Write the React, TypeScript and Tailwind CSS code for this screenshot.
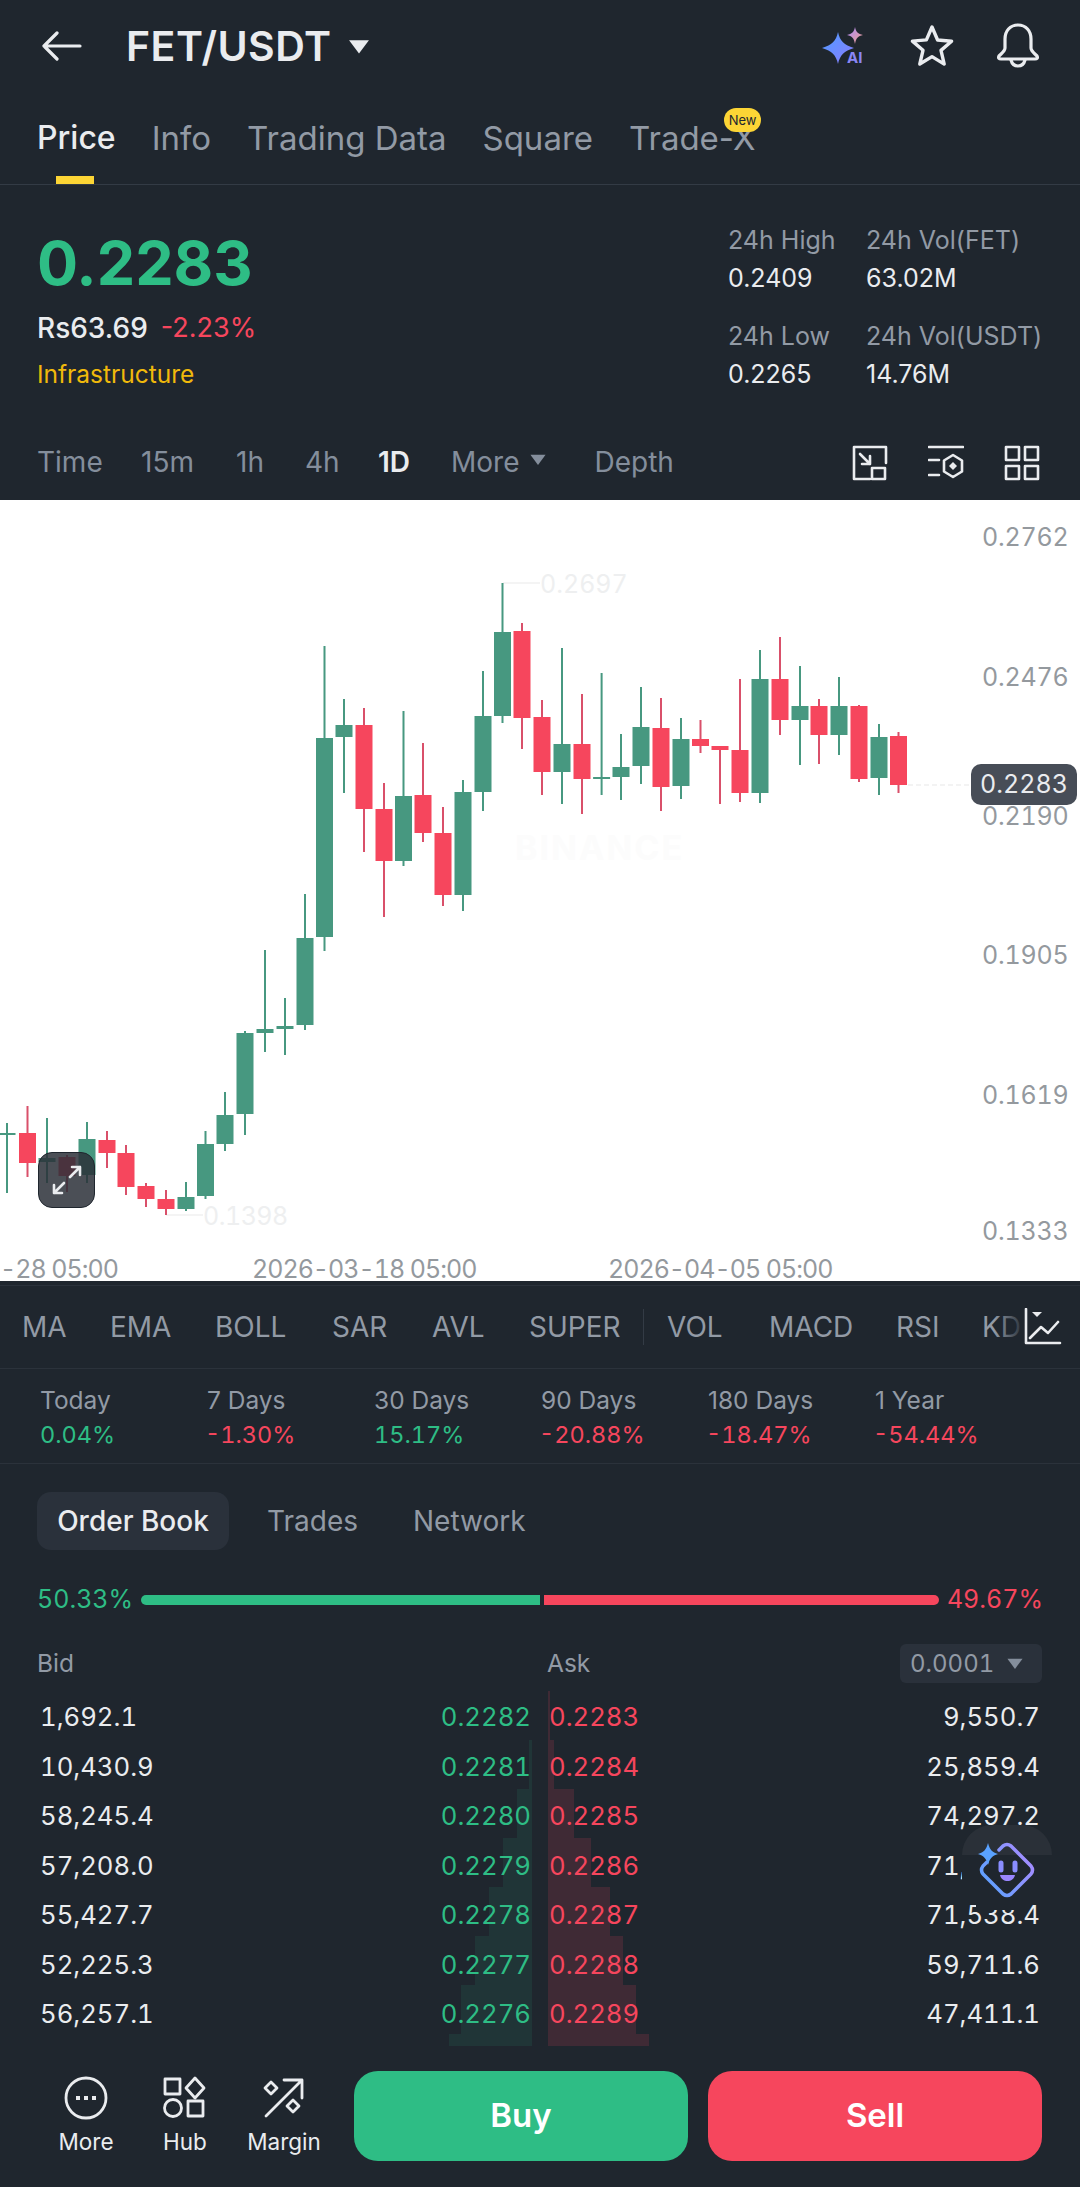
type Candle = [number, number, number, number, number, "g" | "r"];

// x, wick top, wick bottom, body top, body bottom, colour (page pixels)
const candles: Candle[] = [
  [7, 1123, 1193, 1133, 1135, "g"],
  [27.5, 1106, 1177, 1133, 1163, "r"],
  [47, 1118, 1183, 1158, 1162, "g"],
  [67, 1155, 1192, 1157, 1176, "r"],
  [87, 1122, 1183, 1139, 1175, "g"],
  [107, 1131, 1168, 1140, 1153, "r"],
  [126, 1145, 1195, 1153, 1187, "r"],
  [146, 1183, 1207, 1186, 1199, "r"],
  [166, 1190, 1215, 1199, 1209, "r"],
  [186, 1182, 1211, 1197, 1209, "g"],
  [205.5, 1131, 1199, 1144, 1196, "g"],
  [225, 1092, 1151, 1115, 1144, "g"],
  [245, 1031, 1135, 1033, 1114, "g"],
  [265, 950, 1052, 1029, 1033, "g"],
  [285, 998, 1055, 1026, 1029, "g"],
  [305, 894, 1030, 938, 1025, "g"],
  [324.5, 646, 951, 738, 937, "g"],
  [344, 699, 793, 725, 737, "g"],
  [364, 708, 852, 725, 809, "r"],
  [384, 783, 917, 809, 861, "r"],
  [403.5, 711, 866, 796, 861, "g"],
  [423, 743, 842, 795, 833, "r"],
  [443, 807, 906, 833, 895, "r"],
  [463, 780, 911, 792, 895, "g"],
  [483, 671, 811, 716, 792, "g"],
  [502.5, 583, 723, 632, 716, "g"],
  [522, 623, 749, 631, 718, "r"],
  [542, 700, 795, 717, 772, "r"],
  [562, 648, 804, 744, 772, "g"],
  [582, 694, 814, 744, 779, "r"],
  [601.6, 673, 795, 777, 779, "g"],
  [621, 734, 800, 767, 777, "g"],
  [641, 687, 784, 727, 766, "g"],
  [661, 698, 811, 728, 787, "r"],
  [681, 718, 799, 739, 786, "g"],
  [700.5, 720, 753, 739, 746, "r"],
  [720, 746, 804, 746, 750, "r"],
  [740, 679, 802, 750, 793, "r"],
  [760, 650, 803, 679, 793, "g"],
  [780, 637, 735, 679, 720, "r"],
  [800, 666, 765, 706, 720, "g"],
  [819, 699, 764, 706, 735, "r"],
  [839, 677, 755, 706, 735, "g"],
  [859, 705, 782, 706, 779, "r"],
  [879, 724, 795, 737, 778, "g"],
  [898.5, 732, 793, 736, 785, "r"],
];

const axis = [
  ["0.2762", 546],
  ["0.2476", 686],
  ["0.2190", 825],
  ["0.1905", 964],
  ["0.1619", 1104],
  ["0.1333", 1240],
] as const;

const changes = [
  { label: "Today", value: "0.04%", up: true },
  { label: "7 Days", value: "-1.30%", up: false },
  { label: "30 Days", value: "15.17%", up: true },
  { label: "90 Days", value: "-20.88%", up: false },
  { label: "180 Days", value: "-18.47%", up: false },
  { label: "1 Year", value: "-54.44%", up: false },
];

const rows = [
  ["1,692.1", "0.2282", "0.2283", "9,550.7"],
  ["10,430.9", "0.2281", "0.2284", "25,859.4"],
  ["58,245.4", "0.2280", "0.2285", "74,297.2"],
  ["57,208.0", "0.2279", "0.2286", "71,936.3"],
  ["55,427.7", "0.2278", "0.2287", "71,538.4"],
  ["52,225.3", "0.2277", "0.2288", "59,711.6"],
  ["56,257.1", "0.2276", "0.2289", "47,411.1"],
];

const depthBid = ["w-0", "w-[3px]", "w-[15px]", "w-[29px]", "w-[43px]", "w-[57px]", "w-[71px]", "w-[83px]"];
const depthAsk = ["w-[2px]", "w-[6px]", "w-[26px]", "w-[43px]", "w-[62px]", "w-[75px]", "w-[88px]", "w-[101px]"];

const indicators = [
  { label: "MA", width: "w-[88px]" },
  { label: "EMA", width: "w-[105px]" },
  { label: "BOLL", width: "w-[117px]" },
  { label: "SAR", width: "w-[100px]" },
  { label: "AVL", width: "w-[97px]" },
  { label: "SUPER", width: "w-[114px]" },
];

const subIndicators = [
  { label: "VOL", width: "w-[102px]" },
  { label: "MACD", width: "w-[127px]" },
  { label: "RSI", width: "w-[86px]" },
  { label: "KD", width: "w-[42px]" },
];

function Caret({ className }: { className: string }) {
  return (
    <svg viewBox="0 0 16 12" className={className} fill="currentColor">
      <path d="M1 1.5h14L8 11z" strokeLinejoin="round" />
    </svg>
  );
}

function Chart() {
  return (
    <div className="relative h-[781px] bg-white">
      <svg viewBox="0 500 1080 781" className="absolute inset-0 w-[1080px] h-[781px] overflow-visible tabular-nums">
        <text x="515" y="860" className="text-[34px] font-bold fill-[#fcfcfc]" letterSpacing="2">BINANCE</text>
        <line x1="503" y1="583" x2="540" y2="583" stroke="#f0f0f0" strokeWidth="1.5" />
        <text x="540" y="593" className="text-[25px] fill-[#eeeff0]">0.2697</text>
        <line x1="166" y1="1215" x2="203" y2="1215" stroke="#f0f0f0" strokeWidth="1.5" />
        <text x="203" y="1225" className="text-[25px] fill-[#eeeff0]" letterSpacing="-0.5">0.1398</text>
        <line x1="908" y1="785" x2="972" y2="785" stroke="#efefef" strokeWidth="1.5" strokeDasharray="5 3" />
        {candles.map(([x, wt, wb, bt, bb, c]) => (
          <g key={x}>
            <rect x={Math.max(x - 1, 0)} y={wt} width="2" height={wb - wt} fill={c === "g" ? "#479880" : "#d9506a"} />
            <rect x={Math.max(x - 8.5, 0)} y={bt} width={x - 8.5 < 0 ? x + 8.5 : 17} height={bb - bt} fill={c === "g" ? "#479880" : "#f6465d"} />
          </g>
        ))}
        {axis.map(([t, y]) => (
          <text key={t} x="982" y={y} className="text-[25px] fill-[#94999e]" letterSpacing="-0.2">{t}</text>
        ))}
        <text x="0" y="1278" className="text-[25px] fill-[#94999e]" letterSpacing="-1">-28 05:00</text>
        <text x="252" y="1278" className="text-[25px] fill-[#94999e]" letterSpacing="-1">2026-03-18 05:00</text>
        <text x="608" y="1278" className="text-[25px] fill-[#94999e]" letterSpacing="-1">2026-04-05 05:00</text>
      </svg>
      <div className="absolute left-[971px] top-[264px] w-[106px] h-[41px] rounded-[10px] bg-[#474d57] flex items-center justify-center text-[25px] tabular-nums text-[#eaecef]">
        0.2283
      </div>
      <div className="absolute left-[38px] top-[652px] w-[57px] h-[56px] rounded-[14px] bg-[#2b3038]/85 border border-[#1f262e] flex items-center justify-center">
        <svg viewBox="0 0 40 40" className="w-[40px] h-[40px]" fill="none" stroke="#eaecef" strokeWidth="2.6" strokeLinecap="round" strokeLinejoin="round">
          <path d="M23 17 33 7M25 7h8v8M17 23 7 33M7 25v8h8" />
        </svg>
      </div>
    </div>
  );
}

export default function App() {
  return (
    <div className="w-[1080px] h-[2187px] bg-[#1f262e] text-[#eaecef] font-['Inter',sans-serif] overflow-hidden">
      {/* Header */}
      <div className="h-[92px] flex items-center pl-[42px] pr-[40px]">
        <svg viewBox="0 0 40 32" className="w-[40px] h-[32px]" fill="none" stroke="#eaecef" strokeWidth="3.2" strokeLinecap="round" strokeLinejoin="round">
          <path d="M2 16h36M15 3 2 16l13 13" />
        </svg>
        <span className="ml-[44px] text-[41px] leading-none font-semibold tracking-[0.5px]">FET/USDT</span>
        <Caret className="ml-[15px] w-[24px] h-[17px] text-[#eaecef]" />
        <div className="ml-auto flex items-center">
          <svg viewBox="0 0 46 46" className="w-[46px] h-[46px] mr-[42px] mt-[8px]">
            <defs>
              <linearGradient id="sp" x1="0" y1="0" x2="1" y2="1">
                <stop offset="0" stopColor="#4f9cff" />
                <stop offset="1" stopColor="#8a7bff" />
              </linearGradient>
              <linearGradient id="sp2" x1="0" y1="0" x2="1" y2="1">
                <stop offset="0" stopColor="#a98bff" />
                <stop offset="1" stopColor="#f2a08a" />
              </linearGradient>
            </defs>
            <path d="M16 5c2 9 6 13 16 16-10 3-14 7-16 16-2-9-6-13-16-16 10-3 14-7 16-16z" fill="url(#sp)" />
            <path d="M33 0c1 5 3 7 8 8-5 1-7 3-8 9-1-6-3-8-8-9 5-1 7-3 8-8z" fill="url(#sp2)" />
            <text x="25" y="36" className="text-[15px] font-bold" fill="#8a86f5">AI</text>
          </svg>
          <svg viewBox="0 0 44 44" className="w-[44px] h-[44px] mr-[42px]" fill="none" stroke="#eaecef" strokeWidth="3.4" strokeLinejoin="round">
            <path d="m22 3 5.6 13 14 1.2-10.6 9.2 3.2 13.7L22 32.6 9.8 40l3.2-13.7L2.400 17.100l14-1.200z" />
          </svg>
          <svg viewBox="0 0 44 46" className="w-[44px] h-[46px]" fill="none" stroke="#eaecef" strokeWidth="3.2" strokeLinejoin="round" strokeLinecap="round">
            <path d="M22 2c-8 0-13 6-13 14v9c0 3-3 5-6 8-1 2 0 3 2 3h34c2 0 3-1 2-3-3-3-6-5-6-8v-9c0-8-5-14-13-14z" />
            <path d="M15 37c1 4 3.500 6 7 6s6-2 7-6" />
          </svg>
        </div>
      </div>

      {/* Tabs */}
      <div className="h-[93px] border-b border-[#333b45] flex gap-[36px] pl-[37px] pt-[26px] text-[33px] leading-[40px] text-[#929aa5]">
        <div className="relative text-[32px] text-[#eaecef] font-medium">
          Price
          <div className="absolute left-[19px] top-[58px] w-[38px] h-[8px] bg-[#fcd535]" />
        </div>
        <div>Info</div>
        <div>Trading Data</div>
        <div>Square</div>
        <div className="relative">
          Trade-X
          <div className="absolute left-[95px] -top-[10px] w-[37px] h-[24px] rounded-full bg-[#fcd535] flex items-center justify-center text-[13px] leading-none text-[#202630]">
            New
          </div>
        </div>
      </div>

      {/* Price and 24h stats */}
      <div className="h-[245px] flex pl-[37px] pr-[33px]">
        <div>
          <div className="mt-[42px] text-[61px] leading-[72px] font-bold text-[#2ebd85]">0.2283</div>
          <div className="mt-[12px] flex gap-[13px] leading-[34px]">
            <span className="text-[28px] font-medium">Rs63.69</span>
            <span className="text-[27px] text-[#f6465d]">-2.23%</span>
          </div>
          <div className="mt-[14px] text-[24.500px] leading-[30px] text-[#f0b90b]">Infrastructure</div>
        </div>
        <div className="ml-auto self-start mt-[40px] grid grid-cols-[138px_181px] gap-y-[28px] text-[25px] leading-[30px]">
          <div><div className="text-[#929aa5]">24h High</div><div className="mt-[8px]">0.2409</div></div>
          <div><div className="text-[#929aa5]">24h Vol(FET)</div><div className="mt-[8px]">63.02M</div></div>
          <div><div className="text-[#929aa5]">24h Low</div><div className="mt-[8px]">0.2265</div></div>
          <div><div className="text-[#929aa5]">24h Vol(USDT)</div><div className="mt-[8px]">14.76M</div></div>
        </div>
      </div>

      {/* Timeframes */}
      <div className="h-[70px] pt-[15px] flex items-start pl-[37px] pr-[40px] text-[28px] leading-[34px] text-[#848e9c]">
        <span className="w-[104px]">Time</span>
        <span className="w-[95px]">15m</span>
        <span className="w-[69px]">1h</span>
        <span className="w-[73px]">4h</span>
        <span className="w-[73px] font-semibold text-[#eaecef]">1D</span>
        <span>More</span>
        <Caret className="ml-[10px] mt-[8px] w-[18px] h-[13px]" />
        <span className="ml-[47px]">Depth</span>
        <div className="ml-auto flex gap-[40px]">
          <svg viewBox="0 0 36 36" className="w-[36px] h-[36px]" fill="none" stroke="#eaecef" strokeWidth="2.6" strokeLinejoin="round" strokeLinecap="round">
            <path d="M18 34H2V2h32v16M8 9l10 10M18 11v8h-8" />
            <rect x="20" y="23" width="13" height="11" />
          </svg>
          <svg viewBox="0 0 36 36" className="w-[36px] h-[36px]" fill="none" stroke="#eaecef" strokeWidth="2.6" strokeLinejoin="round" strokeLinecap="round">
            <path d="M1 2h34M1 15h10M1 30h10M25 10l9 5.500v11L25 32l-9-5.500v-11z" />
            <path d="m25 17 4 4-4 4-4-4z" fill="#eaecef" stroke="none" />
          </svg>
          <svg viewBox="0 0 36 36" className="w-[36px] h-[36px]" fill="none" stroke="#eaecef" strokeWidth="2.6" strokeLinejoin="round">
            <rect x="2" y="2" width="13" height="13" />
            <rect x="21" y="2" width="13" height="13" />
            <rect x="2" y="21" width="13" height="13" />
            <rect x="21" y="21" width="13" height="13" />
          </svg>
        </div>
      </div>

      <Chart />

      {/* Indicators */}
      <div className="mt-[4px] h-[84px] border-t border-b border-[#2b323b] flex items-center relative text-[28px] text-[#929aa5]">
        <div className="flex items-center pl-[22px] whitespace-nowrap">
          {indicators.map((i) => (
            <span key={i.label} className={`${i.width} shrink-0`}>{i.label}</span>
          ))}
          <span className="w-[24px] h-[36px] shrink-0 border-l border-[#333b45]" />
          {subIndicators.map((i) => (
            <span key={i.label} className={`${i.width} shrink-0`}>{i.label}</span>
          ))}
        </div>
        <div className="absolute left-[994px] top-[20px] w-[32px] h-[44px] bg-gradient-to-r from-transparent to-[#1f262e]" />
        <svg viewBox="0 0 38 38" className="absolute left-[1024px] top-[22px] w-[38px] h-[38px]" fill="none" stroke="#eaecef" strokeWidth="2.6" strokeLinecap="round" strokeLinejoin="round">
          <path d="M2 1v34h34M6 30l11-11 7 6 10-11" />
          <path d="M8 4h10l-5 5z" fill="#eaecef" stroke="none" />
        </svg>
      </div>

      {/* Period changes */}
      <div className="h-[95px] border-b border-[#2b323b] flex pl-[40px] pt-[15px] text-[24.500px] leading-[32px]">
        {changes.map((c) => (
          <div key={c.label} className="w-[167px]">
            <div className="text-[#929aa5]">{c.label}</div>
            <div className={c.up ? "mt-[3px] text-[23.500px] tabular-nums text-[#2ebd85]" : "-ml-[2px] mt-[3px] text-[23.500px] tabular-nums text-[#f6465d]"}>{c.value}</div>
          </div>
        ))}
      </div>

      {/* Order book tabs */}
      <div className="mt-[28px] h-[58px] flex items-center pl-[37px] text-[28px] text-[#929aa5]">
        <div className="h-[58px] w-[192px] rounded-[14px] bg-[#2a313b] flex items-center justify-center font-medium text-[#eaecef]">Order Book</div>
        <span className="ml-[38px]">Trades</span>
        <span className="ml-[55px]">Network</span>
      </div>

      {/* Buy / sell ratio */}
      <div className="mt-[32px] h-[36px] flex items-center pl-[37px] pr-[37px] text-[25px] tabular-nums">
        <span className="w-[104px] text-[#2ebd85]">50.33%</span>
        <div className="w-[399px] h-[10px] rounded-l-full bg-[#2ebd85]" />
        <div className="ml-[4px] w-[395px] h-[10px] rounded-r-full bg-[#f6465d]" />
        <span className="ml-auto text-[#f6465d]">49.67%</span>
      </div>

      {/* Bid / ask head */}
      <div className="mt-[26px] h-[39px] flex items-center pl-[37px] pr-[38px] text-[24.500px] text-[#929aa5]">
        <span className="w-[510px]">Bid</span>
        <span>Ask</span>
        <div className="ml-auto w-[142px] h-[39px] rounded-[6px] bg-[#2a313b] flex items-center pl-[10px] text-[24px] tabular-nums">
          0.0001
          <Caret className="ml-[11px] w-[20px] h-[13px] text-[#848e9c]" />
        </div>
      </div>

      {/* Order book */}
      <div className="relative mt-[7px] h-[356px]">
        <div className="absolute left-0 top-[1px] w-full h-[355px] flex flex-col">
          {depthBid.map((w, i) => (
            <div key={i} className={i === 7 ? "h-[12px] flex" : "h-[49px] flex"}>
              <div className="w-[532px] flex justify-end">
                <div className={`${w} h-full bg-[#2ebd85]/10`} />
              </div>
              <div className="ml-[16px]">
                <div className={`${depthAsk[i]} h-full bg-[#f6465d]/15`} />
              </div>
            </div>
          ))}
        </div>
        <div className="relative pt-[2px] pl-[40px] pr-[40px] text-[25.700px] leading-[49.5px] tabular-nums">
          {rows.map(([bid, bp, ap, ask]) => (
            <div key={bp} className="flex">
              <span className="w-[391px]">{bid}</span>
              <span className="w-[100px] text-right text-[#2ebd85]">{bp}</span>
              <span className="ml-[18px] text-[#f6465d]">{ap}</span>
              <span className="ml-auto">{ask}</span>
            </div>
          ))}
        </div>
        {/* floating assistant button */}
        <div className="absolute left-[962px] top-[135px] w-[90px] h-[30px] rounded-t-full bg-[#2a3038]" />
        <div className="absolute left-[962px] top-[165px] w-[90px] h-[43px] bg-[#1f262e]" />
        <div className="absolute left-[976px] top-[208px] w-[50px] h-[12px] bg-[#1f262e]" />
        <svg viewBox="0 0 90 80" className="absolute left-[962px] top-[135px] w-[90px] h-[80px]" fill="none">
          <defs>
            <linearGradient id="rb" x1="0" y1="0.8" x2="1" y2="0.2">
              <stop offset="0" stopColor="#5aa2ff" />
              <stop offset="1" stopColor="#a98bff" />
            </linearGradient>
          </defs>
          <path d="M37 25l4-4q4-3 8 0l20 20q3 4 0 8L49 69q-4 3-8 0L21 49q-3-4 0-8l4-4" stroke="url(#rb)" strokeWidth="3.500" strokeLinecap="round" strokeLinejoin="round" />
          <path d="M26 18c2 7 4 9 10 11-6 2-8 4-10 11-2-7-4-9-10-11 6-2 8-4 10-11z" fill="#5aa2ff" />
          <path d="M39 38v7M53 38v7" stroke="#8a8dff" strokeWidth="5" strokeLinecap="round" />
          <path d="M38 50h15c-1 4-4 6-7.500 6s-6.500-2-7.500-6z" fill="#9a86ff" />
        </svg>
      </div>

      {/* Bottom bar */}
      <div className="mt-[25px] flex items-center pl-[54px] pr-[38px]">
        <div className="flex flex-col items-center w-[64px] text-[22.500px] leading-[28px]">
          <svg viewBox="0 0 44 44" className="w-[44px] h-[44px] mb-[8px]" fill="none" stroke="#eaecef" strokeWidth="2.800">
            <circle cx="22" cy="22" r="20" />
            <path d="M12 22h4M20 22h4M28 22h4" strokeWidth="4" />
          </svg>
          More
        </div>
        <div className="ml-[35px] flex flex-col items-center w-[64px] text-[22.500px] leading-[28px]">
          <svg viewBox="0 0 44 44" className="w-[44px] h-[44px] mb-[8px]" fill="none" stroke="#eaecef" strokeWidth="2.800" strokeLinejoin="round">
            <rect x="2" y="3" width="15" height="15" />
            <path d="m32 2 9 10-9 10-9-10z" />
            <circle cx="10" cy="32" r="8.500" />
            <rect x="25" y="25" width="15" height="15" />
          </svg>
          Hub
        </div>
        <div className="ml-[27px] flex flex-col items-center w-[80px] text-[22.500px] leading-[28px]">
          <svg viewBox="0 0 44 44" className="w-[44px] h-[44px] mb-[8px]" fill="none" stroke="#eaecef" strokeWidth="2.800" strokeLinecap="round" strokeLinejoin="round">
            <path d="M4 40 40 4M22 4h18v18" />
            <path d="m9 6 6 6-6 6-6-6zM31 24l6 6-6 6-6-6z" />
          </svg>
          Margin
        </div>
        <div className="ml-[30px] w-[334px] h-[90px] rounded-[24px] bg-[#2ebd85] flex items-center justify-center text-[33px] font-semibold text-white">Buy</div>
        <div className="ml-[20px] w-[334px] h-[90px] rounded-[24px] bg-[#f6465d] flex items-center justify-center text-[33px] font-semibold text-white">Sell</div>
      </div>
    </div>
  );
}
